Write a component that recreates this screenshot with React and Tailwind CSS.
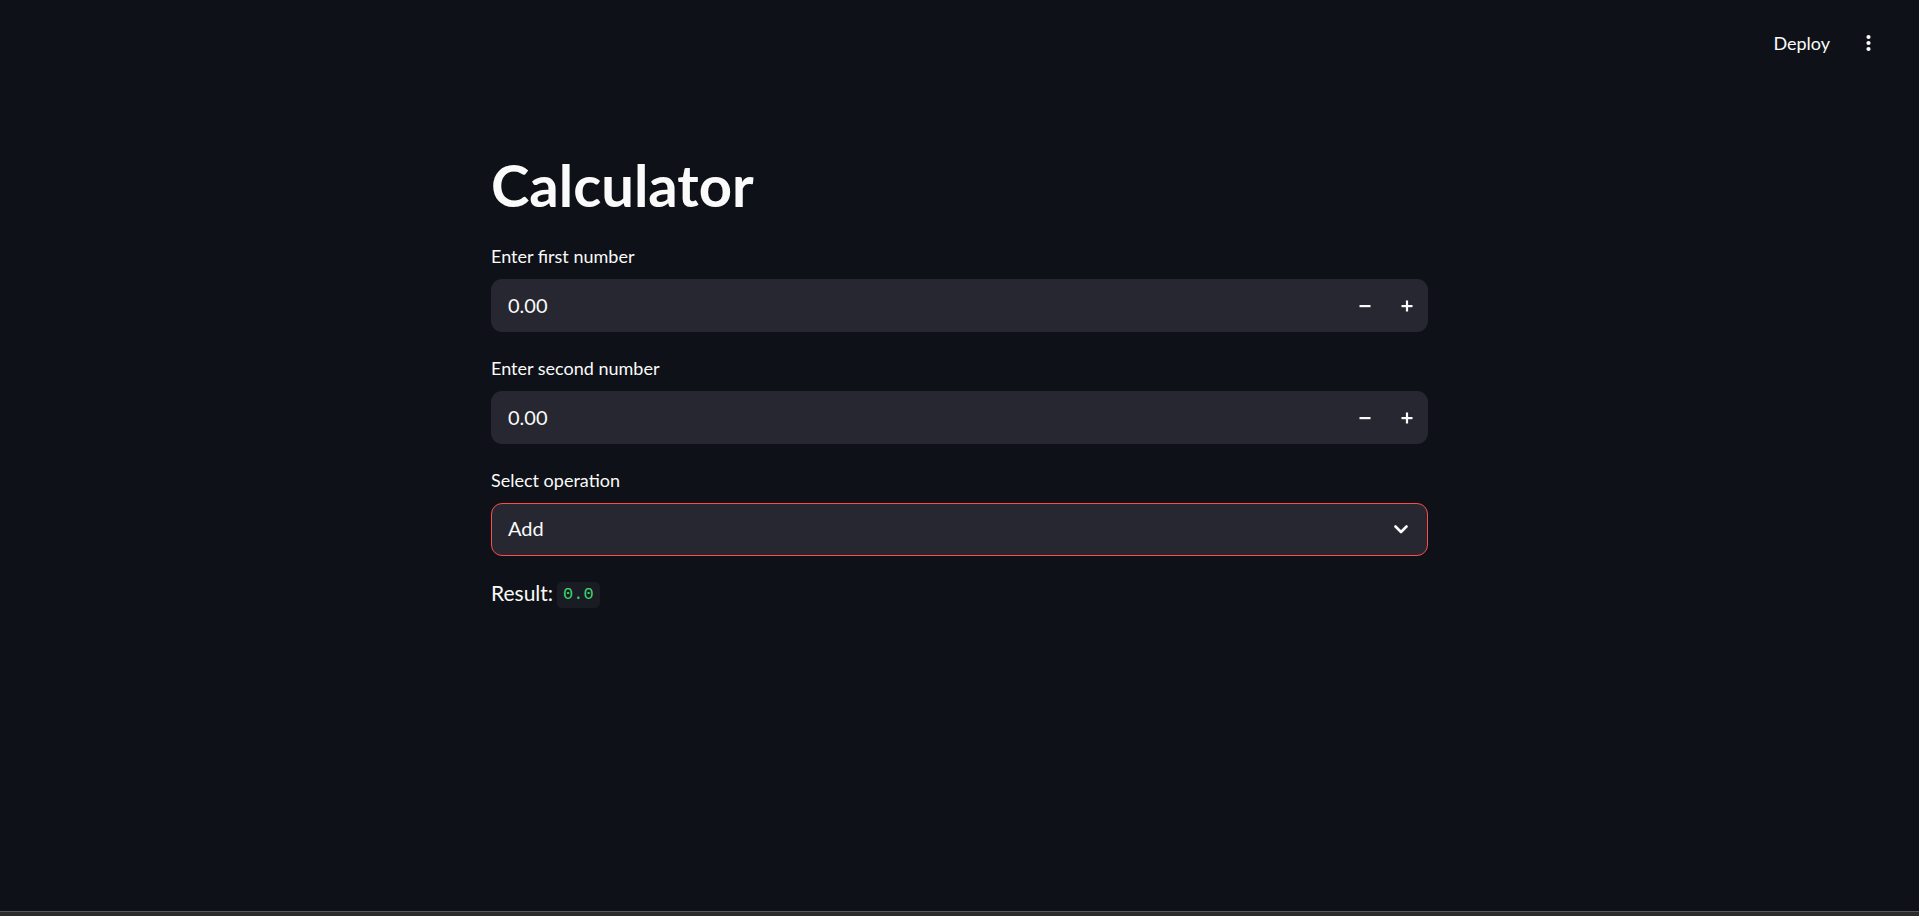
import React from "react";

function Minus() {
  return (
    <svg width="12" height="12" viewBox="0 0 12 12" fill="none">
      <rect x="0.5" y="5" width="11" height="2.2" fill="#fafafa" />
    </svg>
  );
}
function Plus() {
  return (
    <svg width="12" height="12" viewBox="0 0 12 12" fill="none">
      <rect x="0.5" y="5" width="11" height="2.2" fill="#fafafa" />
      <rect x="4.9" y="0.5" width="2.2" height="11" fill="#fafafa" />
    </svg>
  );
}
function Chevron() {
  return (
    <svg width="14" height="9" viewBox="0 0 14 9" fill="none">
      <path d="M1.5 1.5 L7 7 L12.5 1.5" stroke="#fafafa" strokeWidth="2.6" strokeLinecap="round" strokeLinejoin="round" />
    </svg>
  );
}
function Kebab() {
  return (
    <svg width="5" height="18" viewBox="0 0 5 18" fill="#fafafa">
      <circle cx="2.5" cy="3" r="2.1" />
      <circle cx="2.5" cy="9" r="2.1" />
      <circle cx="2.5" cy="15" r="2.1" />
    </svg>
  );
}

function NumberInput({ label }) {
  return (
    <div className="flex flex-col">
      <div className="h-[22px] leading-[22px] text-[18px]">{label}</div>
      <div className="mt-[12px] h-[53px] rounded-[11px] bg-[#262730] flex items-center">
        <div className="flex-1 pl-[17px] pb-[2px] text-[20px] leading-[24px]">0.00</div>
        <div className="w-[42px] h-full flex items-center justify-center"><Minus /></div>
        <div className="w-[42px] h-full flex items-center justify-center"><Plus /></div>
      </div>
    </div>
  );
}

export default function App() {
  return (
    <div className="relative h-[916px] w-full overflow-hidden bg-[#0e1117] text-[#fafafa] font-[Lato,sans-serif]">
      <header className="h-[85px] flex items-center justify-end pr-[48px]">
        <span className="text-[18px] leading-[22px]">Deploy</span>
        <span className="ml-[36px] flex items-center"><Kebab /></span>
      </header>
      <main className="mx-auto w-[937px] pt-[65px] flex flex-col">
        <h1 className="text-[58px] leading-[70px] font-bold">Calculator</h1>
        <div className="mt-[25px]">
          <NumberInput label="Enter first number" />
        </div>
        <div className="mt-[25px]">
          <NumberInput label="Enter second number" />
        </div>
        <div className="mt-[25px] flex flex-col">
          <div className="h-[22px] leading-[22px] text-[18px]">Select operation</div>
          <div className="mt-[12px] h-[53px] rounded-[11px] bg-[#262730] border border-[#ff4b4b] flex items-center">
            <div className="flex-1 pl-[16px] pb-[3px] text-[20px] leading-[24px]">Add</div>
            <div className="w-[52px] flex items-center justify-center"><Chevron /></div>
          </div>
        </div>
        <div className="mt-[26px] h-[26px] flex items-start">
          <span className="text-[21px] leading-[22px]">Result:</span>
          <span className="ml-[4px] h-[26px] px-[6px] rounded-[5px] bg-[#1a1c24] text-[#3dd56d] font-['Liberation_Mono',monospace] text-[17px] leading-[26px]">0.0</span>
        </div>
      </main>
      <div className="absolute bottom-0 left-0 right-0 h-[5px] bg-[#2b2b2b] border-t border-[#555555]" />
    </div>
  );
}
